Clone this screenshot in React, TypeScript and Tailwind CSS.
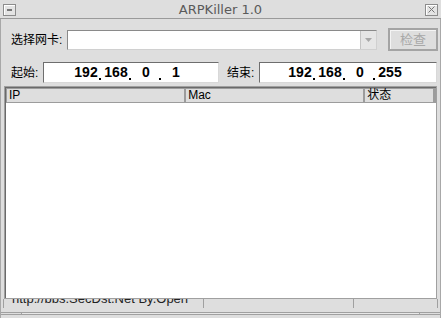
const cjk = { fontFamily: '"Liberation Sans", "Noto Sans CJK SC", sans-serif' };

function IpBox({ parts, pad }: { parts: string[]; pad: string }) {
  return (
    <div
      className={`flex h-[21px] items-stretch bg-white border border-t-[#6e6e6e] border-l-[#6e6e6e] border-b-[#d8d8d8] border-r-[#d8d8d8] ${pad}`}
    >
      {parts.map((p, i) => (
        <div key={i} className="flex">
          <span className="w-[26px] text-center text-[14px] font-bold leading-[19px] text-black">
            {p}
          </span>
          {i < parts.length - 1 && (
            <span className="flex w-[4px] items-end pb-[2px]">
              <span className="h-[2px] w-[2px] bg-black" />
            </span>
          )}
        </div>
      ))}
    </div>
  );
}

function WinButton({ kind }: { kind: "min" | "close" }) {
  return (
    <div className="flex h-[12px] w-[13px] items-center justify-center border border-[#8c8c8c] bg-[#e4e4e4] shadow-[inset_1px_1px_0_#ffffff]">
      {kind === "min" ? (
        <span className="mt-[1px] h-[2px] w-[5px] border border-[#777]" />
      ) : (
        <svg width="7" height="7" viewBox="0 0 7 7">
          <path d="M0.5 0.5 L6.5 6.5 M6.5 0.5 L0.5 6.5" stroke="#777" strokeWidth="1" />
        </svg>
      )}
    </div>
  );
}

export default function App() {
  return (
    <div
      className="flex h-[318px] w-[441px] flex-col overflow-hidden bg-[#dedede] text-[12px] text-black"
      style={cjk}
    >
      {/* title bar */}
      <div className="flex h-[19px] items-center border-b border-[#9a9a9a] px-[3px] pt-[1px]">
        <WinButton kind="min" />
        <div
          className="flex-1 text-center text-[13px] leading-none text-[#5a5a5a]"
          style={{ fontFamily: '"DejaVu Sans", sans-serif' }}
        >
          ARPKiller 1.0
        </div>
        <WinButton kind="close" />
      </div>

      <div className="flex flex-1 flex-col border-x border-[#a8a8a8]">
        {/* adapter row */}
        <div className="mt-[9px] flex h-[23px] items-center pl-[10px]">
          <span className="w-[56px] leading-none">选择网卡:</span>
          <div className="flex h-[20px] w-[310px] border border-t-[#8a8a8a] border-l-[#8a8a8a] border-b-[#d0d0d0] border-r-[#d0d0d0] bg-white">
            <div className="flex-1" />
            <div className="flex w-[16px] items-center justify-center border-l border-[#c4c4c4] bg-[#e6e6e6]">
              <svg width="7" height="4" viewBox="0 0 7 4">
                <path d="M0 0 H7 L3.5 4 Z" fill="#a8a8a8" />
              </svg>
            </div>
          </div>
          <div className="ml-[11px] flex h-[23px] w-[50px] items-center justify-center border-2 border-[#a4a4a4] text-[13px] text-[#a8a8a8] shadow-[inset_1px_1px_0_#f4f4f4]">
            检查
          </div>
        </div>

        {/* ip range row */}
        <div className="mt-[11px] flex h-[21px] items-center pl-[10px]">
          <span className="w-[32px] leading-none">起始:</span>
          <div className="w-[176px]">
            <IpBox parts={["192", "168", "0", "1"]} pad="pl-[29px]" />
          </div>
          <span className="ml-[8px] w-[32px] leading-none">结束:</span>
          <div className="w-[178px]">
            <IpBox parts={["192", "168", "0", "255"]} pad="pl-[27px]" />
          </div>
        </div>

        {/* list view */}
        <div className="mx-[3px] mt-[3px] flex h-[213px] flex-col border border-[#a0a0a0] bg-white shadow-[inset_1px_1px_0_#6a6a6a]">
          <div className="ml-[1px] mt-[1px] flex h-[15px] text-[12px] leading-[13px]">
            <div className="w-[180px] border border-[#9c9c9c] bg-[#dedede] pl-[2px]">IP</div>
            <div className="w-[180px] border border-[#9c9c9c] bg-[#dedede] pl-[2px]">Mac</div>
            <div className="w-[70px] border border-[#9c9c9c] bg-[#dedede] pl-[2px]">状态</div>
            <div className="flex-1 border border-[#9c9c9c] bg-[#dedede]" />
          </div>
        </div>

        {/* status bar */}
        <div className="flex h-[9px] overflow-hidden px-[2px] text-[13px]">
          <div className="w-[201px] overflow-hidden border-x border-[#a0a0a0] pl-[8px]">
            <div className="-mt-[8px] leading-[16px] text-[#222]">http://bbs.SecDst.Net By.Open</div>
          </div>
          <div className="w-[150px] border-r border-[#a0a0a0]" />
          <div className="flex-1 border-r border-[#a0a0a0]" />
        </div>
      </div>

      {/* bottom frame */}
      <div className="flex h-[9px] flex-col border-x border-[#a8a8a8]">
        <div className="mt-[3px] flex h-[3px] border-y border-[#a0a0a0]">
          <div className="w-[21px] border-r border-[#a0a0a0]" />
          <div className="flex-1 border-r border-[#a0a0a0] bg-[#e8e8e8]" />
          <div className="w-[20px]" />
        </div>
      </div>
    </div>
  );
}
